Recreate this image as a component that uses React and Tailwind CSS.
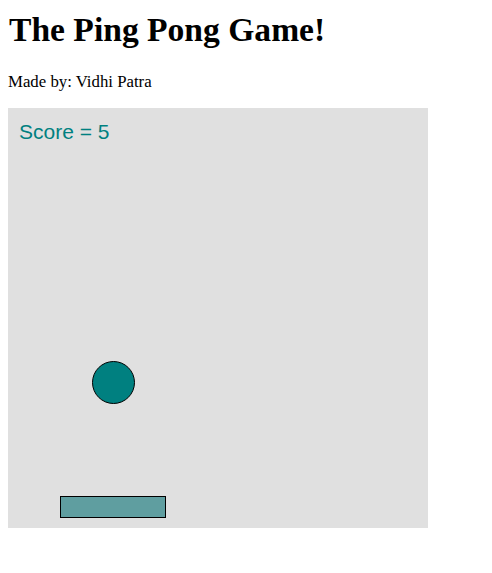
export default function App() {
  return (
    <div className="bg-white min-h-[573px] px-2 pt-[11px]" style={{ fontFamily: '"Liberation Serif", "Times New Roman", serif' }}>
      <h1 className="text-[33.6px] font-bold leading-[38px] text-black pl-[1px]">The Ping Pong Game!</h1>
      <p className="mt-[23px] text-[16.8px] leading-[19px] text-black">Made by: Vidhi Patra</p>
      <div className="mt-[17px] w-[420px] h-[420px] bg-[#e0e0e0]">
        <svg width="420" height="420" viewBox="0 0 420 420">
          <text x="11" y="31" fill="#008080" fontSize="21" style={{ fontFamily: '"Liberation Sans", Arial, sans-serif' }}>Score = 5</text>
          <circle cx="105.5" cy="274.5" r="21" fill="#008080" stroke="#000" strokeWidth="1" />
          <rect x="52.5" y="388.5" width="105" height="21" fill="#5f9ea0" stroke="#000" strokeWidth="1" />
        </svg>
      </div>
    </div>
  );
}
